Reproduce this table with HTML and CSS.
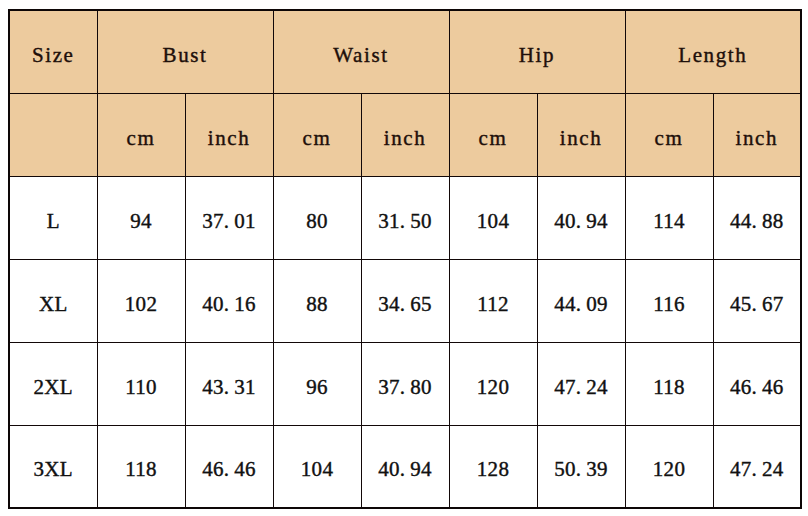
FILE: index.html
```html
<!DOCTYPE html>
<html>
<head>
<meta charset="utf-8">
<link rel="stylesheet" href="styles.css">
</head>
<body>
<table class="size-chart">
  <colgroup>
    <col class="c"><col class="c"><col class="c"><col class="c"><col class="c"><col class="c"><col class="c"><col class="c"><col class="c">
  </colgroup>
  <thead>
    <tr class="head">
      <th>Size</th>
      <th colspan="2">Bust</th>
      <th colspan="2">Waist</th>
      <th colspan="2">Hip</th>
      <th colspan="2">Length</th>
    </tr>
    <tr class="head">
      <th></th>
      <th>cm</th><th>inch</th>
      <th>cm</th><th>inch</th>
      <th>cm</th><th>inch</th>
      <th>cm</th><th>inch</th>
    </tr>
  </thead>
  <tbody>
    <tr>
      <td>L</td>
      <td>94</td><td>37<span class="dt">.</span>01</td>
      <td>80</td><td>31<span class="dt">.</span>50</td>
      <td>104</td><td>40<span class="dt">.</span>94</td>
      <td>114</td><td>44<span class="dt">.</span>88</td>
    </tr>
    <tr>
      <td>XL</td>
      <td>102</td><td>40<span class="dt">.</span>16</td>
      <td>88</td><td>34<span class="dt">.</span>65</td>
      <td>112</td><td>44<span class="dt">.</span>09</td>
      <td>116</td><td>45<span class="dt">.</span>67</td>
    </tr>
    <tr>
      <td>2XL</td>
      <td>110</td><td>43<span class="dt">.</span>31</td>
      <td>96</td><td>37<span class="dt">.</span>80</td>
      <td>120</td><td>47<span class="dt">.</span>24</td>
      <td>118</td><td>46<span class="dt">.</span>46</td>
    </tr>
    <tr>
      <td>3XL</td>
      <td>118</td><td>46<span class="dt">.</span>46</td>
      <td>104</td><td>40<span class="dt">.</span>94</td>
      <td>128</td><td>50<span class="dt">.</span>39</td>
      <td>120</td><td>47<span class="dt">.</span>24</td>
    </tr>
  </tbody>
</table>
</body>
</html>
```
FILE: styles.css
```css
html, body {
  margin: 0;
  padding: 0;
  background: #ffffff;
}
body {
  padding: 9px 0 0 8px;
}
.size-chart {
  border-collapse: collapse;
  table-layout: fixed;
  width: 792px;
  border: 2px solid #0d0606;
  color: #111;
}
.size-chart .c {
  width: 88px;
}
.size-chart th,
.size-chart td {
  height: 83px;
  padding: 7px 0 0 0;
  box-sizing: border-box;
  border: 1px solid #120808;
  text-align: center;
  vertical-align: middle;
  font-family: "Liberation Serif", "DejaVu Serif", serif;
  font-size: 21px;
  font-weight: normal;
  letter-spacing: 0.3px;
  -webkit-text-stroke: 0.4px currentColor;
}
.size-chart th {
  background: #edcb9e;
  color: #1e0f0a;
  letter-spacing: 1.6px;
}
.dt {
  display: inline-block;
  width: 0.5em;
  text-align: left;
}
```
